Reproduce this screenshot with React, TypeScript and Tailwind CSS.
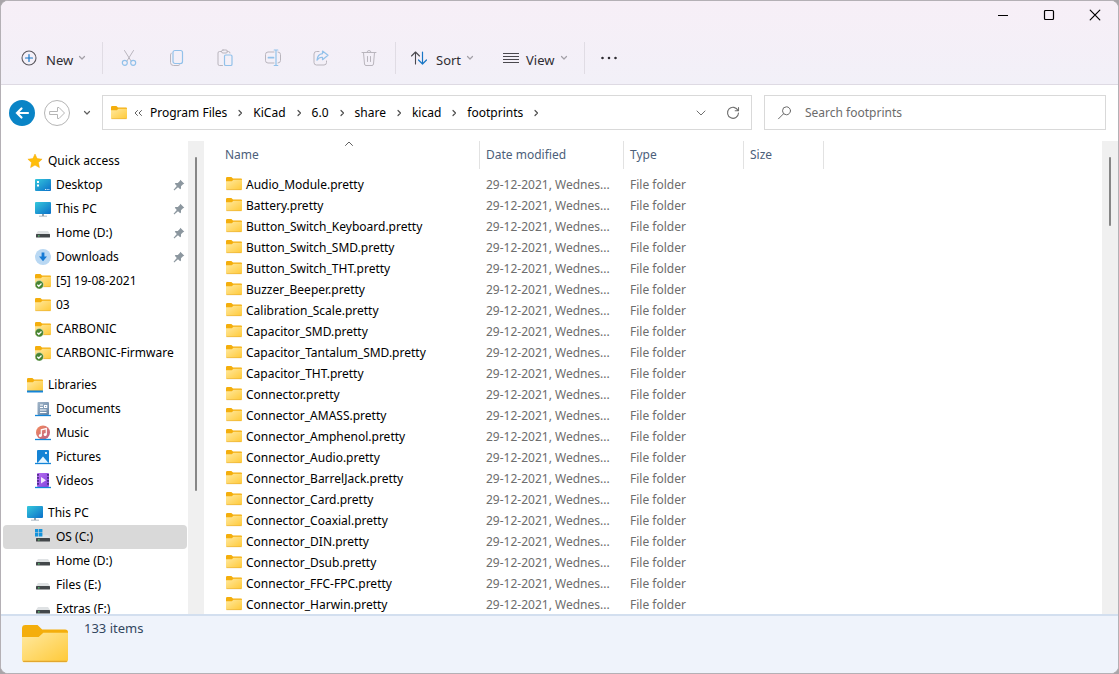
import type { ReactNode } from "react";

type IconName =
  | "desktop"
  | "pc"
  | "drive"
  | "osDrive"
  | "downloads"
  | "folder"
  | "synced"
  | "libraries"
  | "documents"
  | "music"
  | "pictures"
  | "videos"
  | "star";

type NavItem = { label: string; icon: IconName; pinned?: boolean; selected?: boolean };
type NavGroup = NavItem & { items: NavItem[] };

const nav: NavGroup[] = [
  {
    label: "Quick access",
    icon: "star",
    items: [
      { label: "Desktop", icon: "desktop", pinned: true },
      { label: "This PC", icon: "pc", pinned: true },
      { label: "Home (D:)", icon: "drive", pinned: true },
      { label: "Downloads", icon: "downloads", pinned: true },
      { label: "[5] 19-08-2021", icon: "synced" },
      { label: "03", icon: "folder" },
      { label: "CARBONIC", icon: "synced" },
      { label: "CARBONIC-Firmware", icon: "synced" },
    ],
  },
  {
    label: "Libraries",
    icon: "libraries",
    items: [
      { label: "Documents", icon: "documents" },
      { label: "Music", icon: "music" },
      { label: "Pictures", icon: "pictures" },
      { label: "Videos", icon: "videos" },
    ],
  },
  {
    label: "This PC",
    icon: "pc",
    items: [
      { label: "OS (C:)", icon: "osDrive", selected: true },
      { label: "Home (D:)", icon: "drive" },
      { label: "Files (E:)", icon: "drive" },
      { label: "Extras (F:)", icon: "drive" },
    ],
  },
];

const folders = [
  "Audio_Module.pretty",
  "Battery.pretty",
  "Button_Switch_Keyboard.pretty",
  "Button_Switch_SMD.pretty",
  "Button_Switch_THT.pretty",
  "Buzzer_Beeper.pretty",
  "Calibration_Scale.pretty",
  "Capacitor_SMD.pretty",
  "Capacitor_Tantalum_SMD.pretty",
  "Capacitor_THT.pretty",
  "Connector.pretty",
  "Connector_AMASS.pretty",
  "Connector_Amphenol.pretty",
  "Connector_Audio.pretty",
  "Connector_BarrelJack.pretty",
  "Connector_Card.pretty",
  "Connector_Coaxial.pretty",
  "Connector_DIN.pretty",
  "Connector_Dsub.pretty",
  "Connector_FFC-FPC.pretty",
  "Connector_Harwin.pretty",
];

const crumbs = ["Program Files", "KiCad", "6.0", "share", "kicad", "footprints"];

function Gradients() {
  return (
    <svg width="0" height="0" className="absolute" aria-hidden="true">
      <defs>
        <linearGradient id="folder" x1="0" y1="0" x2="1" y2="1">
          <stop offset="0" stopColor="#ffe9a0" />
          <stop offset="1" stopColor="#ffc937" />
        </linearGradient>
        <linearGradient id="screen" x1="0" y1="0" x2="1" y2="1">
          <stop offset="0" stopColor="#35c8dc" />
          <stop offset="1" stopColor="#0b6fc9" />
        </linearGradient>
        <linearGradient id="music" x1="0" y1="0" x2="1" y2="1">
          <stop offset="0" stopColor="#f58b5b" />
          <stop offset="1" stopColor="#b9618c" />
        </linearGradient>
        <linearGradient id="video" x1="0" y1="0" x2="1" y2="1">
          <stop offset="0" stopColor="#b66cf0" />
          <stop offset="1" stopColor="#8446dc" />
        </linearGradient>
        <linearGradient id="doc" x1="0" y1="0" x2="1" y2="1">
          <stop offset="0" stopColor="#a3b6c9" />
          <stop offset="1" stopColor="#6583a4" />
        </linearGradient>
      </defs>
    </svg>
  );
}

const folderShape = (
  <>
    <path d="M0 2.2Q0 1 1.2 1H5.400l1.600 1.600H15q1 0 1 1V8H0Z" fill="#f4ae0c" />
    <path d="M0 5.200h5.800L7.400 3.700h8.600V13q0 1-1 1H1q-1 0-1-1Z" fill="url(#folder)" />
    <path d="M.4 13.700h15.200" stroke="#e2a62e" strokeWidth=".5" />
  </>
);

const driveShape = (
  <>
    <path d="M3 6h10l2 3H1Z" fill="#dfe2e4" />
    <rect x="1" y="9" width="14" height="3.6" rx=".5" fill="#43474a" />
    <rect x="3" y="10.4" width="1.6" height="1" fill="#5fe07b" />
  </>
);

const shapes: Record<IconName, ReactNode> = {
  star: (
    <path
      d="m8 1 2.1 4.6 5 .6-3.7 3.4 1 5L8 12.1l-4.4 2.5 1-5L.9 6.2l5-.6Z"
      fill="#ffbe0b"
      stroke="#f7a900"
      strokeWidth=".5"
      strokeLinejoin="round"
    />
  ),
  desktop: (
    <>
      <rect y="2" width="16" height="12" rx="1" fill="url(#screen)" />
      <path d="M2 4h2v2H2ZM2 7.500h2v2H2Z" fill="#fff" />
      <path d="M10 12.500h4.500" stroke="#d4efff" strokeDasharray="1 .7" />
    </>
  ),
  pc: (
    <>
      <rect y="1" width="16" height="12" rx="1" fill="url(#screen)" />
      <path d="M7 13h2v1.700h3v.8H4v-.8h3Z" fill="#8fa0ad" />
    </>
  ),
  drive: driveShape,
  osDrive: (
    <>
      {driveShape}
      <path d="M0 0h3.400v3.400H0ZM4 0h3.400v3.400H4ZM0 4h3.400v3.400H0ZM4 4h3.400v3.400H4Z" fill="#1594dc" />
    </>
  ),
  downloads: (
    <>
      <circle cx="8" cy="8" r="8" fill="#b9d8f3" />
      <path d="M6.600 3.500h2.800v4H12L8 12.300 4 7.500h2.600Z" fill="#157ad4" />
    </>
  ),
  folder: folderShape,
  synced: (
    <>
      {folderShape}
      <circle cx="4.300" cy="11.800" r="4.200" fill="#478432" stroke="#fff" strokeWidth=".4" />
      <path d="m2.300 11.800 1.500 1.500 2.700-2.800" fill="none" stroke="#fff" strokeWidth="1.300" />
    </>
  ),
  libraries: (
    <>
      {folderShape}
      <path d="M0 13.500h16V15q0 .5-.5.500H.5Q0 15.500 0 15Z" fill="#1384d8" />
    </>
  ),
  documents: (
    <>
      <rect x="2.500" y="1" width="11.500" height="13" rx="1" fill="url(#doc)" />
      <path d="M5 4h3M5 6.500h3M5 9h6.500M5 11.500h6.500M9.500 4.500h2.200v2H9.500Z" stroke="#fff" strokeWidth="1.100" fill="none" />
      <path d="M0 14.500h16" stroke="#1384d8" strokeWidth="1.300" />
    </>
  ),
  music: (
    <>
      <circle cx="8" cy="7.500" r="7" fill="url(#music)" />
      <path d="M6.300 10.500V4.800l5-1.200V9.500" fill="none" stroke="#fff" strokeWidth="1.200" />
      <circle cx="5.300" cy="10.500" r="1.500" fill="#fff" />
      <circle cx="10.200" cy="9.600" r="1.500" fill="#fff" />
      <path d="M0 14.500h16" stroke="#1384d8" strokeWidth="1.300" />
    </>
  ),
  pictures: (
    <>
      <rect x="2" y="1" width="12" height="13" rx="1" fill="#1583d5" />
      <path d="m2.500 14 5.500-6.500L13.500 14Z" fill="#e8f6ff" />
      <circle cx="11" cy="4" r="1.100" fill="#fff" />
      <path d="M0 14.500h16" stroke="#1384d8" strokeWidth="1.300" />
    </>
  ),
  videos: (
    <>
      <rect x="2" y="0" width="12" height="14" rx="1" fill="url(#video)" />
      <path d="M3 1v12M13 1v12" stroke="#3d2277" strokeWidth="1.600" strokeDasharray="1.700 1.300" />
      <path d="M6 4v6.500l5-3.200Z" fill="#f3e8ff" />
      <path d="M0 14.500h16" stroke="#1384d8" strokeWidth="1.300" />
    </>
  ),
};

function Icon({ name, className = "size-4" }: { name: IconName; className?: string }) {
  return (
    <svg viewBox="0 0 16 16" className={`shrink-0 overflow-visible ${className}`} aria-hidden="true">
      {shapes[name]}
    </svg>
  );
}

function Glyph({ size = 18, className = "", children }: { size?: number; className?: string; children: ReactNode }) {
  return (
    <svg
      width={size}
      height={size}
      viewBox={`0 0 ${size} ${size}`}
      fill="none"
      stroke="currentColor"
      strokeLinecap="round"
      strokeLinejoin="round"
      className={`shrink-0 ${className}`}
      aria-hidden="true"
    >
      {children}
    </svg>
  );
}

function Chevron({ className = "" }: { className?: string }) {
  return (
    <Glyph size={8} className={className}>
      <path d="m1.500 2.500 2.500 2.500 2.500-2.500" strokeWidth="1.200" />
    </Glyph>
  );
}

function Divider() {
  return <span className="h-8 w-px shrink-0 bg-[#e0dce4]" />;
}

function ToolButton({ label, children }: { label: string; children: ReactNode }) {
  return (
    <button aria-label={label} className="flex h-8 w-12 items-center justify-center text-[#b9b5bd]">
      {children}
    </button>
  );
}

function TitleBar() {
  return (
    <div className="flex h-7 justify-end text-black">
      <button aria-label="Minimize" className="flex w-[46px] items-center justify-center">
        <Glyph size={12}>
          <path d="M1 6.500h10" strokeLinecap="butt" />
        </Glyph>
      </button>
      <button aria-label="Maximize" className="flex w-[46px] items-center justify-center">
        <Glyph size={12}>
          <rect x="1.500" y="1.500" width="9" height="9" rx="1" strokeWidth="1.200" />
        </Glyph>
      </button>
      <button aria-label="Close" className="flex w-[46px] items-center justify-center">
        <Glyph size={12}>
          <path d="m1.200 1.200 9.600 9.600M10.800 1.200l-9.600 9.600" strokeWidth="1.200" />
        </Glyph>
      </button>
    </div>
  );
}

function CommandBar() {
  return (
    <div className="flex items-center pb-2.5 pt-[13px] pl-[19px] text-[13px] text-[#2f2d33]">
      <button className="flex h-8 items-center pr-4">
        <Glyph className="mr-2 text-[#5c5960]">
          <circle cx="9" cy="9" r="7" strokeWidth="1.100" />
          <path d="M9 5.500v7M5.500 9h7" stroke="#1976c5" strokeWidth="1.200" />
        </Glyph>
        <span className="w-8 pt-1 text-left">New</span>
        <Chevron className="text-[#a3a0a7]" />
      </button>
      <Divider />
      <div className="flex px-0.5">
        <ToolButton label="Cut">
          <Glyph>
            <path d="m4.500 1.500 6.700 10.700M13.500 1.500 6.800 12.200" />
            <circle cx="4.800" cy="13.800" r="2.500" stroke="#92c1ea" strokeWidth="1.200" />
            <circle cx="13.200" cy="13.800" r="2.500" stroke="#92c1ea" strokeWidth="1.200" />
          </Glyph>
        </ToolButton>
        <ToolButton label="Copy">
          <Glyph>
            <path d="M3.500 4Q2.500 5 2.500 6v7.500q0 3 3 3H10q1 0 2-1" />
            <rect x="5" y="1.500" width="9.500" height="13" rx="2" stroke="#92c1ea" strokeWidth="1.200" />
          </Glyph>
        </ToolButton>
        <ToolButton label="Paste">
          <Glyph>
            <path d="M5.500 2.500H3.500q-1.500 0-1.500 1.500v11q0 1.500 1.500 1.500h3M11 2.500h1.500q1.500 0 1.500 1.500" />
            <rect x="5.500" y="1" width="6" height="3" rx="1.500" />
            <rect x="8.500" y="6" width="7.500" height="10.500" rx="1.300" stroke="#92c1ea" strokeWidth="1.200" />
          </Glyph>
        </ToolButton>
        <ToolButton label="Rename">
          <Glyph>
            <path d="M10 3H4Q1.500 3 1.500 5.500v6Q1.500 14 4 14h6M14 3q2.500 0 2.500 2.500v6q0 2.500-2.500 2.500" />
            <path d="M12 1.500v15M10.200 1h3.600M10.200 16.500h3.600" stroke="#92c1ea" strokeWidth="1.200" />
            <path d="M4.500 8.700h5" stroke="#92c1ea" strokeWidth="1.800" />
          </Glyph>
        </ToolButton>
        <ToolButton label="Share">
          <Glyph>
            <path d="M7 2.500H4.500Q2 2.500 2 5v8.500Q2 16 4.500 16H12q2.500 0 2.500-2.500V12" />
            <path
              d="M10.500 2 16 6.300l-5.500 4.400V8.300Q7 8 5 11.200q.5-6 5.500-6.500Z"
              stroke="#92c1ea"
              strokeWidth="1.200"
            />
          </Glyph>
        </ToolButton>
        <ToolButton label="Delete">
          <Glyph>
            <path d="M2 3.500h14M7 3.500q0-2 2-2t2 2M3.500 3.500l1 11.500q.2 1.500 1.500 1.500h6q1.300 0 1.500-1.500l1-11.500M7.500 7.500v5M10.500 7.500v5" />
          </Glyph>
        </ToolButton>
      </div>
      <Divider />
      <button className="flex h-8 items-center pl-3.5 pr-5">
        <Glyph className="mr-2 text-[#4a484e]">
          <path d="M5.500 15V3M1.500 7l4-4 4 4" strokeWidth="1.100" />
          <path d="M12.500 3v12M8.500 11l4 4 4-4" stroke="#1976c5" strokeWidth="1.200" />
        </Glyph>
        <span className="w-[30px] pt-1 text-left">Sort</span>
        <Chevron className="text-[#a3a0a7]" />
      </button>
      <button className="flex h-8 items-center pl-2 pr-4">
        <Glyph className="mr-1.5 text-[#4a484e]">
          <path d="M1 4.500h16M1 7.500h16M1 10.500h16M1 13.500h16" strokeLinecap="butt" />
        </Glyph>
        <span className="w-[34px] pt-1 text-left">View</span>
        <Chevron className="text-[#a3a0a7]" />
      </button>
      <Divider />
      <button aria-label="See more" className="flex h-8 w-12 items-center justify-center">
        <Glyph>
          <path d="M2.500 9h.01M9 9h.01M15.500 9h.01" strokeWidth="2.600" />
        </Glyph>
      </button>
    </div>
  );
}

function AddressBar() {
  return (
    <div className="flex items-center gap-[11px] pb-[11px] pl-2 pr-3 pt-2.5">
      <div className="flex items-center">
        <button aria-label="Back" className="flex size-[26px] items-center justify-center rounded-full bg-[#0a84c6] text-white">
          <Glyph>
            <path d="M15 9H4M8.500 4.500 4 9l4.500 4.500" strokeWidth="2.200" strokeLinejoin="miter" />
          </Glyph>
        </button>
        <button
          aria-label="Forward"
          className="ml-[9px] flex size-[26px] items-center justify-center rounded-full border border-[#b5b5b5] text-[#b5b5b5]"
        >
          <Glyph>
            <path d="M2 7.500h7.500V3.500h1.500L16.500 9 11 14.500H9.500v-4H2Z" />
          </Glyph>
        </button>
        <button aria-label="Recent locations" className="ml-[13px] flex h-8 items-center text-[#5f5f5f]">
          <Chevron />
        </button>
      </div>
      <div className="grid min-w-0 flex-1 grid-cols-[650fr_342fr] gap-3">
        <nav aria-label="Address" className="flex h-[35px] min-w-0 items-center border border-[#d9d9d9] pl-2 text-black">
          <Icon name="folder" />
          <Glyph size={10} className="ml-1.5 text-[#5f5f5f]">
            <path d="M4.500 2.500 2 5l2.500 2.500M8.500 2.500 6 5l2.500 2.500" />
          </Glyph>
          <ol className="flex items-center pl-[7px]">
            {crumbs.map((c) => (
              <li key={c} className="flex items-center">
                <a href="#" className="whitespace-nowrap">
                  {c}
                </a>
                <Glyph size={8} className="mx-[9px] text-[#4f4f4f]">
                  <path d="M3 1.500 5.500 4 3 6.500" strokeWidth="1.200" />
                </Glyph>
              </li>
            ))}
          </ol>
          <button aria-label="Previous locations" className="ml-auto flex size-8 items-center justify-center text-[#6f6f6f]">
            <Glyph size={10}>
              <path d="m1 3 4 4 4-4" />
            </Glyph>
          </button>
          <button aria-label="Refresh" className="mr-0.5 flex size-8 items-center justify-center text-[#6f6f6f]">
            <Glyph size={14}>
              <path d="M12 4.500A5.500 5.500 0 1 0 12.500 7M12.500 1.500v3.300H9.200" strokeWidth="1.100" />
            </Glyph>
          </button>
        </nav>
        <label className="flex h-[35px] min-w-0 items-center gap-3 border border-[#d9d9d9] px-3 text-[#6b6b6b]">
          <Glyph size={16}>
            <circle cx="9.500" cy="5.800" r="4" />
            <path d="m6.500 8.800-5 5" />
          </Glyph>
          <input
            type="text"
            aria-label="Search footprints"
            placeholder="Search footprints"
            className="min-w-0 flex-1 bg-transparent pt-px outline-none placeholder:text-[#6b6b6b]"
          />
        </label>
      </div>
    </div>
  );
}

function NavRow({ item, top = false }: { item: NavItem; top?: boolean }) {
  return (
    <a
      href="#"
      className={`ml-[2px] mr-px flex h-6 items-center gap-[5px] rounded-sm pr-[2px] text-black ${top ? "pl-6" : "pl-8"} ${
        item.selected ? "bg-[#d9d9d9]" : ""
      }`}
    >
      <Icon name={item.icon} />
      <span className="flex-1 whitespace-nowrap">{item.label}</span>
      {item.pinned && (
        <svg viewBox="0 0 12 12" className="size-3 shrink-0" aria-hidden="true">
          <path
            d="M7.300.7 11.300 4.700 10 5.200 8 7.200 8 9.600 7.200 10.200 5 8.200 1.200 11.400.6 10.800 3.800 7 1.800 4.800 2.400 4 4.800 4 6.800 2Z"
            fill="#8c979f"
          />
        </svg>
      )}
    </a>
  );
}

function Sidebar() {
  return (
    <div className="flex w-[203px] shrink-0">
      <nav aria-label="Folders" className="w-[187px] overflow-hidden pt-2">
        {nav.map((group) => (
          <div key={group.label} className="mb-2">
            <NavRow item={group} top />
            {group.items.map((item) => (
              <NavRow key={item.label} item={item} />
            ))}
          </div>
        ))}
      </nav>
      <div className="flex w-4 justify-center bg-[#f0f0f0] pt-4">
        <div className="h-[73%] w-0.5 rounded-full bg-[#868686]" />
      </div>
    </div>
  );
}

function Column({ label, sorted = false, className = "pl-1.5" }: { label: string; sorted?: boolean; className?: string }) {
  return (
    <th scope="col" aria-sort={sorted ? "ascending" : undefined} className="h-[33px] p-0 align-top font-normal">
      <div className={`relative flex h-7 items-center border-r border-[#e2e2e2] ${className}`}>
        {label}
        {sorted && (
          <Glyph size={10} className="absolute left-[140px] top-[-2px] text-[#5f5f5f]">
            <path d="m1.500 6.500 3.500-3.500 3.500 3.500" />
          </Glyph>
        )}
      </div>
    </th>
  );
}

function FileList() {
  return (
    <main className="min-w-0 flex-1 overflow-hidden">
      <table className="w-[620px] table-fixed border-collapse text-left">
        <colgroup>
          <col className="w-[276px]" />
          <col className="w-36" />
          <col className="w-[120px]" />
          <col className="w-20" />
        </colgroup>
        <thead className="text-[#4c607a]">
          <tr>
            <Column label="Name" sorted className="pl-[21px]" />
            <Column label="Date modified" />
            <Column label="Type" />
            <Column label="Size" />
          </tr>
        </thead>
        <tbody className="text-[#6d6d6d]">
          {folders.map((name) => (
            <tr key={name} className="h-[21px]">
              <td className="p-0 pl-[22px] text-black">
                <div className="flex items-center gap-1">
                  <Icon name="folder" className="mb-0.5 size-4" />
                  {name}
                </div>
              </td>
              <td className="whitespace-nowrap p-0 pl-1.5">29-12-2021, Wednes...</td>
              <td className="p-0 pl-1.5">File folder</td>
              <td />
            </tr>
          ))}
        </tbody>
      </table>
    </main>
  );
}

export default function App() {
  return (
    <div className="h-screen bg-[#a9a5a9] font-['Noto_Sans',sans-serif] text-[12px] leading-5">
      <Gradients />
      <div className="flex h-full flex-col overflow-hidden rounded-lg border border-[#b4b0b5] bg-white">
        <header className="border-b border-[#dedae3] bg-linear-to-b from-[#f7eff7] to-[#f2f0f8]">
          <TitleBar />
          <CommandBar />
        </header>
        <AddressBar />
        <div className="flex min-h-0 flex-1">
          <Sidebar />
          <FileList />
          <div className="flex w-4 shrink-0 justify-center bg-[#f0f0f0] pt-4">
            <div className="h-[15%] w-0.5 rounded-full bg-[#868686]" />
          </div>
        </div>
        <footer className="flex h-[59px] shrink-0 gap-4 border-t-2 border-[#d3dfef] bg-[#eff3fb] pl-[21px] text-[13px] text-[#33475f]">
          <Icon name="folder" className="mt-1.5 size-[46px]" />
          <p className="pt-0.5">133 items</p>
        </footer>
      </div>
    </div>
  );
}
